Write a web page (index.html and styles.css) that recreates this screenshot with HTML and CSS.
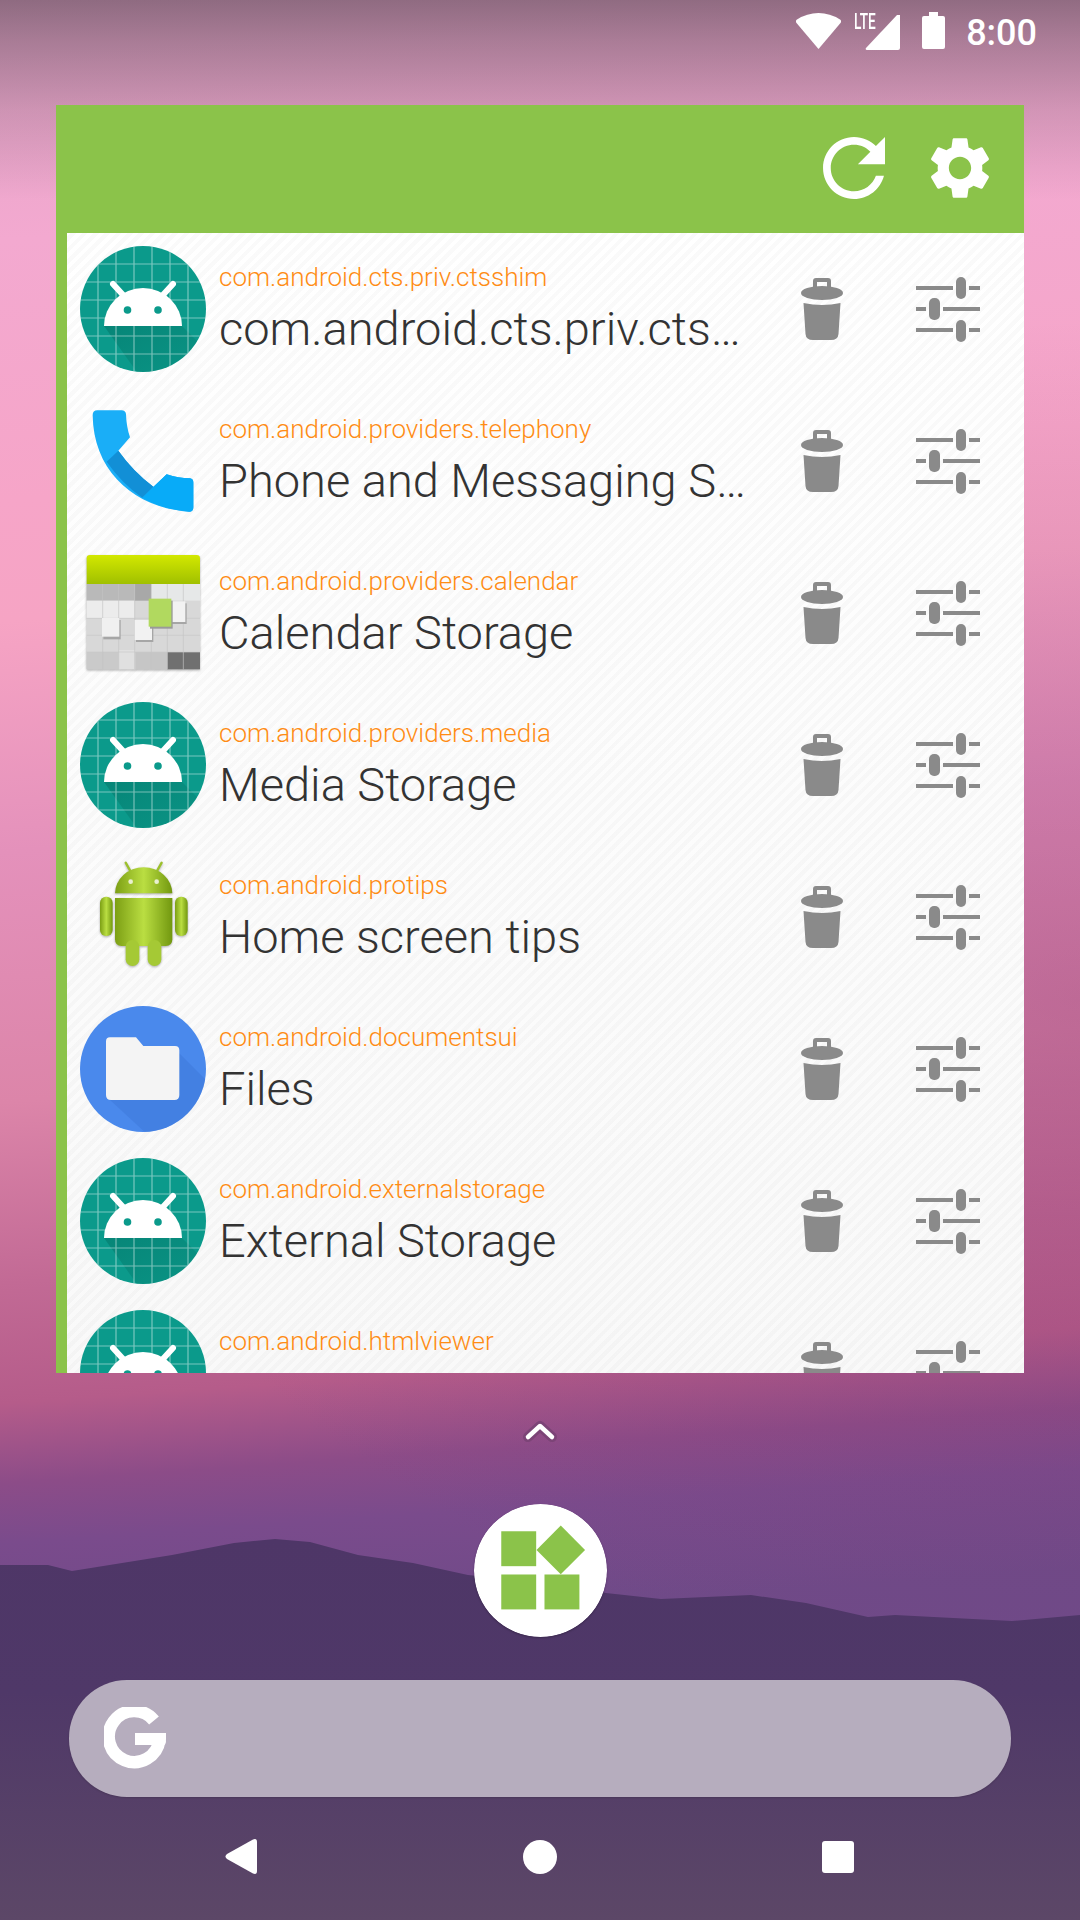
FILE: index.html
```html
<!DOCTYPE html>
<html lang="en">
<head>
<meta charset="utf-8">
<title>App widget</title>
<link rel="stylesheet" href="styles.css">
</head>
<body>
<svg class="defs" aria-hidden="true">
  <defs>
    <linearGradient id="calTop" x1="0" y1="0" x2="0" y2="1"><stop offset="0" stop-color="#d3e800"/><stop offset="1" stop-color="#a0c000"/></linearGradient>
    <linearGradient id="droidBody" x1="0" y1="0" x2="1" y2="0"><stop offset="0" stop-color="#7c9f14"/><stop offset=".5" stop-color="#bade42"/><stop offset="1" stop-color="#72980f"/></linearGradient>
    <linearGradient id="tealShade" x1="0" y1="0" x2="1" y2="1"><stop offset="0" stop-color="#00695c" stop-opacity=".42"/><stop offset="1" stop-color="#00695c" stop-opacity="0"/></linearGradient>
    <clipPath id="tealClip"><circle cx="63" cy="63" r="63"/></clipPath>
    <clipPath id="blueClip"><circle cx="249" cy="687" r="189"/></clipPath>
  </defs>
  <symbol id="i-generic" viewBox="0 0 126 126">
    <g clip-path="url(#tealClip)">
      <rect width="126" height="126" fill="#0b9a8b"/>
      <path d="M24 80H102L150 128V150H74Z" fill="url(#tealShade)"/>
      <path d="M18 0V126M36 0V126M54 0V126M72 0V126M90 0V126M108 0V126M0 18H126M0 36H126M0 54H126M0 72H126M0 90H126M0 108H126" stroke="#fff" stroke-opacity=".45" stroke-width="1.200" fill="none"/>
    </g>
    <path d="M24 80A39 38 0 0 1 102 80Z" fill="#fff"/>
    <path d="M33 38L44 50M93 38L82 50" stroke="#fff" stroke-width="6" stroke-linecap="round"/>
    <circle cx="47.500" cy="64" r="3.800" fill="#0b9a8b"/>
    <circle cx="78" cy="64" r="3.800" fill="#0b9a8b"/>
  </symbol>
  <symbol id="i-phone" viewBox="90 504 378 378">
    <path d="M128 555Q128 541 142 541H215Q226 541 228 552Q229 590 240 622L205 662Q250 725 310 770L350 733Q385 745 420 745Q430 747 430 757V832Q430 845 418 845C260 835 130 730 128 555Z" fill="#1aaef7"/>
    <path d="M205 662L170 695Q215 760 277 803L310 770Q250 725 205 662Z" fill="#128fd6"/>
    <path d="M350 733Q385 745 420 745Q430 747 430 757V832Q430 845 418 845Q345 840 277 803Z" fill="#08abf8"/>
  </symbol>
  <symbol id="i-calendar" viewBox="60 30 378 378">
    <rect x="80" y="132" width="340" height="256" rx="6" fill="#d8d8d8"/>
    <path d="M80 132H224V182H80Z" fill="#b9b9b9"/>
    <rect x="224" y="132" width="50" height="50" fill="#a8a8a8"/>
    <rect x="274" y="132" width="146" height="50" fill="#e6e8e8"/>
    <rect x="80" y="182" width="144" height="52" fill="#ececec"/>
    <rect x="80" y="336" width="96" height="52" fill="#cacaca"/>
    <rect x="176" y="330" width="50" height="58" fill="#e0e0e0"/>
    <rect x="226" y="336" width="96" height="52" fill="#c6c6c6"/>
    <rect x="322" y="336" width="98" height="52" fill="#707070"/>
    <path d="M80 235H420M80 286H420M80 336H420" stroke="#c8c8c8" stroke-width="2"/>
    <path d="M128 132V388M176 132V388M224 132V388M274 132V388M322 132V388M370 132V388" stroke="#c4c4c4" stroke-width="2"/>
    <rect x="130" y="240" width="52" height="58" fill="#a6a6a6"/>
    <rect x="126" y="234" width="52" height="56" fill="#f0f0f0"/>
    <rect x="228" y="246" width="52" height="60" fill="#a6a6a6"/>
    <rect x="224" y="240" width="52" height="60" fill="#f2f2f2"/>
    <rect x="334" y="190" width="46" height="62" fill="#a6a6a6"/>
    <rect x="330" y="184" width="46" height="62" fill="#f2f2f2"/>
    <rect x="270" y="182" width="68" height="84" fill="#9a9a9a"/>
    <rect x="266" y="176" width="68" height="84" fill="#b1d95f"/>
    <path d="M80 132V55Q80 45 90 45H410Q420 45 420 55V132Z" fill="url(#calTop)"/>
  </symbol>
  <symbol id="i-droid" viewBox="60 42 378 378">
    <path d="M197 68L212 95M305 68L290 95" stroke="#9cc02c" stroke-width="7" stroke-linecap="round"/>
    <path d="M165 160A86 78 0 0 1 337 160Z" fill="url(#droidBody)"/>
    <path d="M165 174H337V298Q337 318 317 318H185Q165 318 165 298Z" fill="url(#droidBody)"/>
    <rect x="120" y="170" width="38" height="118" rx="18" fill="url(#droidBody)"/>
    <rect x="345" y="170" width="38" height="118" rx="18" fill="url(#droidBody)"/>
    <rect x="197" y="300" width="41" height="78" rx="20" fill="#a5c935"/>
    <rect x="263" y="300" width="41" height="78" rx="20" fill="#a5c935"/>
    <circle cx="212" cy="125" r="7" fill="#e9f0cf"/>
    <circle cx="290" cy="125" r="7" fill="#e9f0cf"/>
  </symbol>
  <symbol id="i-folder" viewBox="60 498 378 378">
    <g clip-path="url(#blueClip)">
      <rect x="60" y="498" width="378" height="378" fill="#4a89ec"/>
      <path d="M358 640L480 762V900H280L150 780Z" fill="#3c76d8" fill-opacity=".45"/>
    </g>
    <path d="M150 592H228L250 618H345Q358 618 358 631V765Q358 780 343 780H153Q138 780 138 765V604Q138 592 150 592Z" fill="#f4f4f4"/>
  </symbol>
  <symbol id="i-trash" viewBox="0 0 42 62">
    <path d="M12 10V3Q12 0 15 0H27Q30 0 30 3V10H26V4H16V10Z" fill="#8a8a8a"/>
    <ellipse cx="21" cy="15" rx="21" ry="7" fill="#8a8a8a"/>
    <path d="M2.500 25Q21 29 39.500 25L37.500 56Q37 62 30 62H12Q5 62 4.500 56Z" fill="#8a8a8a"/>
  </symbol>
  <symbol id="i-sliders" viewBox="0 0 64 65">
    <path d="M0 11H37M53 11H64M0 32H10M27 32H64M0 53H37M53 53H64" stroke="#8a8a8a" stroke-width="4" fill="none"/>
    <rect x="40" y="0" width="10" height="22" rx="5" fill="#8a8a8a"/>
    <rect x="13" y="21" width="11" height="22" rx="5" fill="#8a8a8a"/>
    <rect x="40" y="43" width="10" height="22" rx="5" fill="#8a8a8a"/>
  </symbol>
</svg>

<svg class="hills" viewBox="0 0 1080 1920" preserveAspectRatio="none" aria-hidden="true">
  <defs><linearGradient id="hillFill" gradientUnits="userSpaceOnUse" x1="0" y1="1540" x2="0" y2="1920"><stop offset="0" stop-color="#4e3667"/><stop offset=".4" stop-color="#4f3868"/><stop offset="1" stop-color="#5c4767"/></linearGradient></defs>
  <path d="M0 1565L48 1565L72 1571L172 1555L234 1543L275 1539L310 1542L358 1555L413 1563L468 1575L537 1582L606 1593L661 1599L751 1595L806 1603L868 1617L895 1615L1012 1621L1080 1615V1920H0Z" fill="url(#hillFill)"/>
</svg>
<div class="scrim"></div>

<main class="screen">
  <header class="status">
    <svg class="st-wifi" viewBox="0 0 45 36"><path d="M22.500 36L0.500 10Q-1 8 1 6.500Q11 0 22.500 0T44 6.500Q46 8 44.500 10Z" fill="#fff"/></svg>
    <span class="st-lte">LTE</span>
    <svg class="st-signal" viewBox="0 0 35 35"><path d="M35 0V33Q35 35 33 35H2Q0 35 1 33L32 0Q35 -1 35 0Z" fill="#fff"/></svg>
    <svg class="st-batt" viewBox="0 0 23 37"><path d="M7 0H16V4H21Q23 4 23 6V35Q23 37 21 37H2Q0 37 0 35V6Q0 4 2 4H7Z" fill="#fff"/></svg>
    <span class="st-time">8:00</span>
  </header>

  <section class="widget">
    <div class="bar">
      <svg class="bar-ic" viewBox="4 4 16 16"><path d="M17.650 6.350C16.200 4.900 14.210 4 12 4c-4.420 0-7.990 3.580-7.990 8s3.570 8 7.990 8c3.730 0 6.840-2.550 7.730-6h-2.080c-.820 2.330-3.040 4-5.650 4-3.310 0-6-2.690-6-6s2.690-6 6-6c1.660 0 3.140.690 4.220 1.780L13 11h7V4l-2.350 2.350z" fill="#fff"/></svg>
      <svg class="bar-ic bar-gear" viewBox="2.500 2 19 20"><path d="M19.140 12.940c.040-.300.060-.610.060-.940 0-.320-.020-.640-.070-.940l2.030-1.580c.180-.140.230-.410.120-.610l-1.920-3.320c-.120-.220-.370-.290-.590-.220l-2.390.960c-.500-.380-1.030-.700-1.620-.940l-.360-2.540c-.040-.240-.240-.410-.480-.410h-3.840c-.240 0-.430.170-.470.410l-.360 2.540c-.590.240-1.130.570-1.620.940l-2.390-.960c-.220-.080-.470 0-.590.220L2.740 8.870c-.120.210-.080.470.120.610l2.030 1.580c-.050.300-.090.630-.090.940s.020.640.070.940l-2.030 1.580c-.180.140-.230.410-.120.610l1.920 3.320c.120.220.370.290.590.220l2.390-.960c.500.380 1.030.700 1.620.940l.360 2.540c.050.240.240.410.480.410h3.840c.240 0 .440-.170.470-.410l.360-2.540c.590-.240 1.130-.560 1.620-.940l2.390.960c.220.080.470 0 .590-.220l1.920-3.320c.120-.220.070-.470-.120-.61l-2.010-1.580zM12 15.600c-1.980 0-3.600-1.620-3.600-3.600s1.620-3.600 3.600-3.600 3.600 1.620 3.600 3.600-1.620 3.600-3.600 3.600z" fill="#fff"/></svg>
    </div>
    <ul class="list">
      <li class="row">
        <svg class="app-ic"><use href="#i-generic"/></svg>
        <div class="txt"><p class="pkg">com.android.cts.priv.ctsshim</p><p class="name">com.android.cts.priv.ctsshim</p></div>
        <svg class="trash"><use href="#i-trash"/></svg><svg class="sliders"><use href="#i-sliders"/></svg>
      </li>
      <li class="row">
        <svg class="app-ic"><use href="#i-phone"/></svg>
        <div class="txt"><p class="pkg">com.android.providers.telephony</p><p class="name">Phone and Messaging Storage</p></div>
        <svg class="trash"><use href="#i-trash"/></svg><svg class="sliders"><use href="#i-sliders"/></svg>
      </li>
      <li class="row">
        <svg class="app-ic soft"><use href="#i-calendar"/></svg>
        <div class="txt"><p class="pkg">com.android.providers.calendar</p><p class="name">Calendar Storage</p></div>
        <svg class="trash"><use href="#i-trash"/></svg><svg class="sliders"><use href="#i-sliders"/></svg>
      </li>
      <li class="row">
        <svg class="app-ic"><use href="#i-generic"/></svg>
        <div class="txt"><p class="pkg">com.android.providers.media</p><p class="name">Media Storage</p></div>
        <svg class="trash"><use href="#i-trash"/></svg><svg class="sliders"><use href="#i-sliders"/></svg>
      </li>
      <li class="row">
        <svg class="app-ic soft"><use href="#i-droid"/></svg>
        <div class="txt"><p class="pkg">com.android.protips</p><p class="name">Home screen tips</p></div>
        <svg class="trash"><use href="#i-trash"/></svg><svg class="sliders"><use href="#i-sliders"/></svg>
      </li>
      <li class="row">
        <svg class="app-ic"><use href="#i-folder"/></svg>
        <div class="txt"><p class="pkg">com.android.documentsui</p><p class="name">Files</p></div>
        <svg class="trash"><use href="#i-trash"/></svg><svg class="sliders"><use href="#i-sliders"/></svg>
      </li>
      <li class="row">
        <svg class="app-ic"><use href="#i-generic"/></svg>
        <div class="txt"><p class="pkg">com.android.externalstorage</p><p class="name">External Storage</p></div>
        <svg class="trash"><use href="#i-trash"/></svg><svg class="sliders"><use href="#i-sliders"/></svg>
      </li>
      <li class="row">
        <svg class="app-ic"><use href="#i-generic"/></svg>
        <div class="txt"><p class="pkg">com.android.htmlviewer</p><p class="name">&nbsp;</p></div>
        <svg class="trash"><use href="#i-trash"/></svg><svg class="sliders"><use href="#i-sliders"/></svg>
      </li>
    </ul>
  </section>

  <svg class="chevron" viewBox="0 0 34 22"><path d="M5 17L17 6L29 17" fill="none" stroke="#7c4477" stroke-width="10" stroke-linecap="round" stroke-linejoin="round"/><path d="M5 17L17 6L29 17" fill="none" stroke="#fff" stroke-width="4.500" stroke-linecap="round" stroke-linejoin="round"/></svg>

  <svg class="launcher" viewBox="220 403 400 400">
    <circle cx="420" cy="603" r="200" fill="#fff"/>
    <rect x="302" y="485" width="105" height="105" fill="#8bc34a"/>
    <rect x="302" y="615" width="105" height="105" fill="#8bc34a"/>
    <rect x="432" y="615" width="105" height="105" fill="#8bc34a"/>
    <path d="M481 468L554 541L481 614L408 541Z" fill="#8bc34a"/>
  </svg>

  <div class="search">
    <svg class="g-logo" viewBox="0 0 62 63"><path d="M50 13.500A25.500 25.500 0 1 0 55.500 33" fill="none" stroke="#fff" stroke-width="12.500"/><path d="M31 26H62V32Q62 38 60 38H31Z" fill="#fff"/></svg>
  </div>

  <nav class="nav">
    <svg class="nav-back" viewBox="0 0 32 35"><path d="M2 15L28 0.500Q32 -1 32 3V32Q32 36 28 34.500L2 20Q-1 17.500 2 15Z" fill="#fff"/></svg>
    <span class="nav-home"></span>
    <span class="nav-recent"></span>
  </nav>
</main>
</body>
</html>
```

FILE: styles.css
```css
* { box-sizing: border-box; }
html, body { margin: 0; padding: 0; }
body {
  width: 1080px;
  height: 1920px;
  overflow: hidden;
  position: relative;
  font-family: Roboto, "Liberation Sans", sans-serif;
  background:
    radial-gradient(1000px 680px at 100% 1000px, rgba(130,50,110,.34), rgba(130,50,110,0)),
    linear-gradient(176deg, #e2a4c6 0, #f3a9d0 240px, #f6a5c8 500px, #f6a4c4 620px, #e491bb 850px, #dc85a9 1100px, #c26a95 1280px, #b55c8a 1400px, #8c4c88 1480px, #7a4b8c 1540px, #6f4a88 1640px);
}
.defs { position: absolute; width: 0; height: 0; }
.hills { position: absolute; inset: 0; width: 1080px; height: 1920px; }
.scrim {
  position: absolute; left: 0; top: 0; width: 1080px; height: 200px;
  background: linear-gradient(180deg, rgba(60,50,60,.5) 0, rgba(60,50,60,.36) 40px, rgba(60,50,60,.16) 110px, rgba(60,50,60,0) 200px);
}
.screen { position: relative; display: flex; flex-direction: column; align-items: center; height: 1920px; }

.status { width: 1080px; height: 105px; padding: 12px 43px 0 0; display: flex; align-items: flex-start; justify-content: flex-end; position: relative; }
.st-wifi { width: 45px; height: 36px; margin-top: 1px; }
.st-lte { position: absolute; left: 854px; top: 11px; font-size: 22px; line-height: 22px; font-weight: 500; color: #fff; transform: scaleX(.62); transform-origin: left; }
.st-signal { width: 35px; height: 35px; margin: 3px 0 0 24px; }
.st-batt { width: 23px; height: 37px; margin-left: 22px; }
.st-time { margin-left: 21px; font-size: 36px; line-height: 40px; font-weight: 500; color: #fff; margin-top: 1px; }

.widget { width: 968px; height: 1268px; background: #8bc34a; display: flex; flex-direction: column; overflow: hidden; }
.bar { height: 128px; flex: none; display: flex; align-items: center; justify-content: flex-end; gap: 45px; padding: 0 34px 2px 0; }
.bar-ic { width: 62px; height: 62px; display: block; }
.bar-gear { width: 60px; }

.list {
  list-style: none; margin: 0 0 0 11px; padding: 0; flex: 1; overflow: hidden;
  background: repeating-linear-gradient(-45deg, rgba(255,255,255,0) 0 4px, rgba(0,0,0,.018) 4px 8px), linear-gradient(180deg, #fff, #f9f9f9);
}
.row { height: 152px; display: flex; align-items: center; padding-left: 13px; }
.app-ic { width: 126px; height: 126px; flex: none; }
.soft { filter: blur(.5px) drop-shadow(0 1px 1px rgba(0,0,0,.3)); }
.txt { width: 535px; margin-left: 13px; flex: none; }
.pkg { margin: 0 0 8px; font-size: 26px; line-height: 32px; font-weight: 300; color: #ff8c14; white-space: nowrap; }
.name { margin: 0; font-size: 47px; line-height: 56px; font-weight: 300; color: #333; white-space: nowrap; overflow: hidden; text-overflow: ellipsis; }
.trash { width: 42px; height: 62px; flex: none; margin-left: 47px; }
.sliders { width: 64px; height: 65px; flex: none; margin-left: 73px; }

.chevron { width: 34px; height: 22px; margin-top: 47px; }
.launcher { width: 133px; height: 133px; margin-top: 62px; border-radius: 50%; box-shadow: 0 1px 2px rgba(0,0,0,.25); }
.search { width: 942px; height: 117px; margin-top: 43px; border-radius: 58px; background: #b6adbe; display: flex; align-items: center; padding-left: 35px; box-shadow: 0 1px 2px rgba(0,0,0,.15); }
.g-logo { width: 62px; height: 63px; }
.nav { width: 1080px; display: flex; align-items: center; height: 35px; margin-top: 42px; padding-left: 225px; }
.nav-back { width: 32px; height: 35px; }
.nav-home { width: 34px; height: 34px; border-radius: 50%; background: #fff; margin-left: 266px; }
.nav-recent { width: 32px; height: 32px; border-radius: 3px; background: #fff; margin-left: 265px; }
```
